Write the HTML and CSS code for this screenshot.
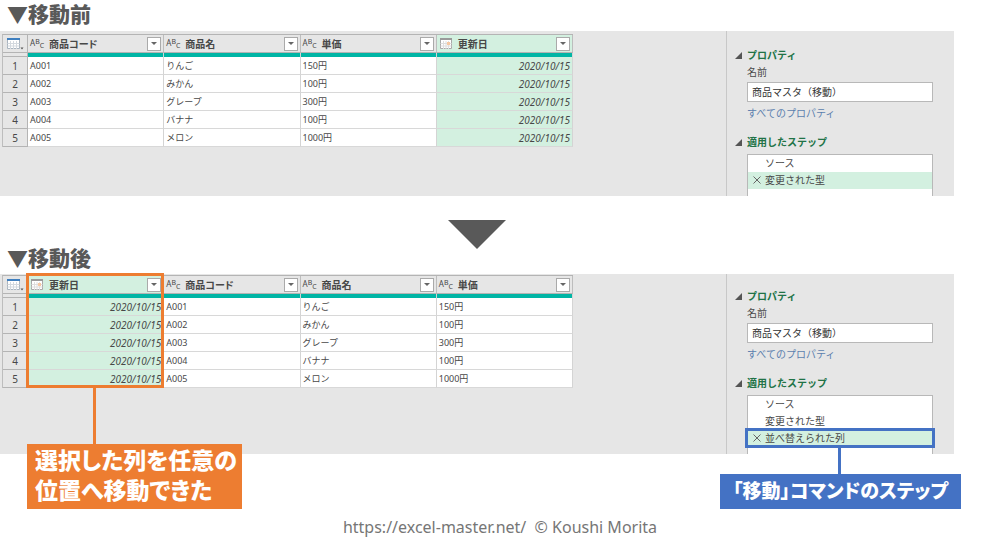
FILE: index.html
```html
<!DOCTYPE html>
<html lang="ja">
<head>
<meta charset="utf-8">
<title>列の移動</title>
<link rel="stylesheet" href="styles.css">
</head>
<body>
<svg class="defs" width="0" height="0" aria-hidden="true">
  <symbol id="grid" viewBox="0 0 17 12">
    <path d="M.5 .5h12v10h-12z" fill="#fff" stroke="#a9b4bf"/>
    <path d="M.5 5.5h12M.5 8h12M3.5 3v8M6.500 3v8M9.500 3v8" stroke="#d3d9df" fill="none"/>
    <path d="M0 0h13v2H0z" fill="#3f7fbf"/>
    <path d="M13.500 9.500h3l-1.500 2z" fill="#555"/>
  </symbol>
  <symbol id="date" viewBox="0 0 12 12">
    <path d="M.5 .5h11v10h-11z" fill="#fff" stroke="#a8a8a8"/>
    <path d="M.5 5.500h11M.5 8h11M3.500 3v8M6 3v8M8.500 3v8" stroke="#dedede" fill="none"/>
    <path d="M0 0h12v2H0z" fill="#9a9a9a"/>
    <path d="M7 4h3v3H7z" fill="#f6c9a4"/>
  </symbol>
  <symbol id="close" viewBox="0 0 8 8"><path d="M.5 .5l7 7M7.500 .5l-7 7" stroke="#666" fill="none"/></symbol>
</svg>

<main>
  <h2 class="title first">▼移動前</h2>
  <section class="panel before">
    <div class="data">
      <table>
        <thead>
          <tr>
            <th class="num"><svg class="i-grid"><use href="#grid"/></svg></th>
            <th><div class="head"><span class="abc">A<sup>B</sup><sub>C</sub></span><span class="name">商品コード</span><button class="filter" aria-label="商品コードのフィルター"></button></div></th>
            <th><div class="head"><span class="abc">A<sup>B</sup><sub>C</sub></span><span class="name">商品名</span><button class="filter" aria-label="商品名のフィルター"></button></div></th>
            <th><div class="head"><span class="abc">A<sup>B</sup><sub>C</sub></span><span class="name">単価</span><button class="filter" aria-label="単価のフィルター"></button></div></th>
            <th class="sel"><div class="head"><svg class="i-date"><use href="#date"/></svg><span class="name">更新日</span><button class="filter" aria-label="更新日のフィルター"></button></div></th>
          </tr>
          <tr class="bar"><td class="num"></td><td></td><td></td><td></td><td></td></tr>
        </thead>
        <tbody>
          <tr><th class="num">1</th><td>A001</td><td>りんご</td><td>150円</td><td class="sel date">2020/10/15</td></tr>
          <tr><th class="num">2</th><td>A002</td><td>みかん</td><td>100円</td><td class="sel date">2020/10/15</td></tr>
          <tr><th class="num">3</th><td>A003</td><td>グレープ</td><td>300円</td><td class="sel date">2020/10/15</td></tr>
          <tr><th class="num">4</th><td>A004</td><td>バナナ</td><td>100円</td><td class="sel date">2020/10/15</td></tr>
          <tr><th class="num">5</th><td>A005</td><td>メロン</td><td>1000円</td><td class="sel date">2020/10/15</td></tr>
        </tbody>
      </table>
    </div>
    <aside class="side">
      <h3>プロパティ</h3>
      <label for="name1">名前</label>
      <input id="name1" type="text" value="商品マスタ（移動）">
      <a href="#">すべてのプロパティ</a>
      <h3>適用したステップ</h3>
      <ul class="steps">
        <li>ソース</li>
        <li class="sel"><button class="del" aria-label="削除"><svg><use href="#close"/></svg></button>変更された型</li>
      </ul>
    </aside>
  </section>

  <div class="between">
    <h2 class="title">▼移動後</h2>
    <svg class="arrow" viewBox="0 0 58 29" aria-hidden="true"><path d="M0 0h58L29 29z" fill="#595959"/></svg>
  </div>

  <section class="panel after">
    <div class="data">
      <table>
        <thead>
          <tr>
            <th class="num"><svg class="i-grid"><use href="#grid"/></svg></th>
            <th class="sel"><div class="head"><svg class="i-date"><use href="#date"/></svg><span class="name">更新日</span><button class="filter" aria-label="更新日のフィルター"></button></div></th>
            <th><div class="head"><span class="abc">A<sup>B</sup><sub>C</sub></span><span class="name">商品コード</span><button class="filter" aria-label="商品コードのフィルター"></button></div></th>
            <th><div class="head"><span class="abc">A<sup>B</sup><sub>C</sub></span><span class="name">商品名</span><button class="filter" aria-label="商品名のフィルター"></button></div></th>
            <th><div class="head"><span class="abc">A<sup>B</sup><sub>C</sub></span><span class="name">単価</span><button class="filter" aria-label="単価のフィルター"></button></div></th>
          </tr>
          <tr class="bar"><td class="num"></td><td></td><td></td><td></td><td></td></tr>
        </thead>
        <tbody>
          <tr><th class="num">1</th><td class="sel date">2020/10/15</td><td>A001</td><td>りんご</td><td>150円</td></tr>
          <tr><th class="num">2</th><td class="sel date">2020/10/15</td><td>A002</td><td>みかん</td><td>100円</td></tr>
          <tr><th class="num">3</th><td class="sel date">2020/10/15</td><td>A003</td><td>グレープ</td><td>300円</td></tr>
          <tr><th class="num">4</th><td class="sel date">2020/10/15</td><td>A004</td><td>バナナ</td><td>100円</td></tr>
          <tr><th class="num">5</th><td class="sel date">2020/10/15</td><td>A005</td><td>メロン</td><td>1000円</td></tr>
        </tbody>
      </table>
      <div class="mark orange"><p class="callout">選択した列を任意の<br>位置へ移動できた</p></div>
    </div>
    <aside class="side">
      <h3>プロパティ</h3>
      <label for="name2">名前</label>
      <input id="name2" type="text" value="商品マスタ（移動）">
      <a href="#">すべてのプロパティ</a>
      <h3>適用したステップ</h3>
      <ul class="steps">
        <li>ソース</li>
        <li>変更された型</li>
        <li class="sel"><button class="del" aria-label="削除"><svg><use href="#close"/></svg></button>並べ替えられた列
          <div class="mark blue"><p class="callout">「移動」コマンドのステップ</p></div></li>
      </ul>
    </aside>
  </section>
</main>
<footer>https://excel-master.net/&nbsp; © Koushi Morita</footer>
</body>
</html>
```
FILE: styles.css
```css
* { box-sizing: border-box; }
body {
  margin: 0;
  background: #fff;
  color: #484848;
  font: 10px/16px "Noto Sans", "Noto Sans CJK JP", sans-serif;
}
.defs { position: absolute; }
h2, h3, p, ul { margin: 0; padding: 0; }
main { width: 95.4%; }

.title {
  padding-left: 7px;
  color: #595959;
  font: 900 21px/26px "Noto Sans CJK JP", sans-serif;
}
.title.first { height: 31px; }

.between {
  display: grid;
  grid-template-columns: 1fr 58px 1fr;
  height: 78px;
}
.between .title { align-self: end; padding-bottom: 4px; }
.arrow { width: 58px; height: 29px; margin-top: 24px; }

.panel {
  display: grid;
  grid-template-columns: 1fr 228px;
  background: #e6e6e6;
}
.before { min-height: 165px; }
.after { min-height: 180px; }
.data { position: relative; padding: 3px 0 0 2px; }
.after .data { padding-top: 1px; }

table {
  width: 571px;
  table-layout: fixed;
  border-collapse: separate;
  border-spacing: 0;
  border-top: 1px solid #b4b4b4;
  border-left: 1px solid #bdbdbd;
}
th, td {
  height: 18px;
  padding: 0 2px;
  border-right: 1px solid #d4d4d4;
  border-bottom: 1px solid #d8d8d8;
  background: #fff;
  font-size: 9px;
  line-height: 16px;
  font-weight: 400;
  text-align: left;
  white-space: nowrap;
}
thead th {
  background: #e6e6e6;
  border-right-color: #bdbdbd;
  border-bottom-color: #b4b4b4;
}
.num {
  width: 25px;
  background: #e6e6e6;
  border-right-color: #b4b4b4;
  border-bottom-color: #b4b4b4;
  font-size: 10px;
  text-align: center;
}
.bar td { height: 4px; padding: 0; border-bottom: 0; background: #00b5a5; line-height: 0; }
.bar .num { background: #e6e6e6; border-bottom: 1px solid #b4b4b4; }
.sel, thead .sel { background: #d3f0e0; }
.date { font-size: 10px; text-align: right; font-style: italic; }

.head { display: flex; align-items: center; height: 17px; }
.head .name {
  flex: 1;
  font-size: 10px;
  font-weight: 700;
  font-feature-settings: "palt";
}
.abc { display: flex; width: 19px; font-size: 8px; line-height: 10px; }
.abc sup, .abc sub { font-size: 7px; line-height: 8px; }
.abc sub { padding-top: 4px; }
.i-grid { display: block; width: 17px; height: 12px; margin-left: 2px; }
.i-date { width: 12px; height: 12px; margin: 0 6px 0 1px; }
.filter {
  display: grid;
  place-items: center;
  width: 14px;
  height: 14px;
  padding: 0;
  border: 1px solid #aaa;
  background: #fff;
}
.filter::after {
  content: "";
  border: 3px solid transparent;
  border-top-color: #666;
  border-bottom: 0;
}

.side {
  display: flex;
  flex-direction: column;
  padding: 16px 21px 0 20px;
  border-left: 1px solid #c8c8c8;
  font-family: "Noto Sans CJK JP", sans-serif;
}
.after .side { padding-top: 14px; }
h3 {
  display: flex;
  align-items: center;
  gap: 5px;
  margin-left: -12px;
  color: #217346;
  font-size: 10px;
  line-height: 16px;
}
h3::before {
  content: "";
  border-left: 7px solid transparent;
  border-bottom: 7px solid #555;
}
.side label { margin-top: 1px; }
.side input {
  width: 100%;
  height: 20px;
  margin: 2px 0 3px;
  padding: 0 4px 1px;
  border: 1px solid #b8b8b8;
  background: #fff;
  color: #333;
  font: inherit;
}
.side a { margin-bottom: 13px; color: #5b7fae; text-decoration: none; }
.steps {
  flex: 1;
  margin-top: 4px;
  border: 1px solid #b8b8b8;
  border-bottom: 0;
  background: #fff;
  list-style: none;
}
.steps li { position: relative; height: 17px; padding-left: 17px; line-height: 16px; }
.del { position: absolute; left: 5px; top: 4px; width: 8px; height: 8px; padding: 0; border: 0; background: none; }
.del svg { display: block; width: 8px; height: 8px; }

.mark { position: absolute; }
.mark::after { content: ""; position: absolute; top: 100%; width: 3px; }
.callout {
  position: absolute;
  color: #fff;
  font-family: "Liberation Sans", "Noto Sans CJK JP", sans-serif;
  font-weight: 900;
  font-feature-settings: "palt";
  white-space: nowrap;
}
.orange { left: 26px; top: -1px; width: 138px; height: 115px; border: 3px solid #ed7d31; }
.orange::after { left: 64px; height: 60px; background: #ed7d31; }
.orange .callout {
  left: -2px;
  top: 168px;
  width: 215px;
  padding: 2px 8px 3px;
  background: #ed7d31;
  font-size: 23px;
  line-height: 30px;
}
.blue { left: -3px; right: -3px; top: -2px; height: 20px; border: 3px solid #4472c4; }
.blue::after { left: 90px; height: 29px; background: #4472c4; }
.blue .callout {
  right: -29px;
  top: 43px;
  width: 241px;
  background: #4472c4;
  font-size: 19px;
  line-height: 35px;
  text-align: center;
}

footer {
  padding-top: 62px;
  color: #767676;
  font-size: 16px;
  line-height: 22px;
  text-align: center;
}
```
